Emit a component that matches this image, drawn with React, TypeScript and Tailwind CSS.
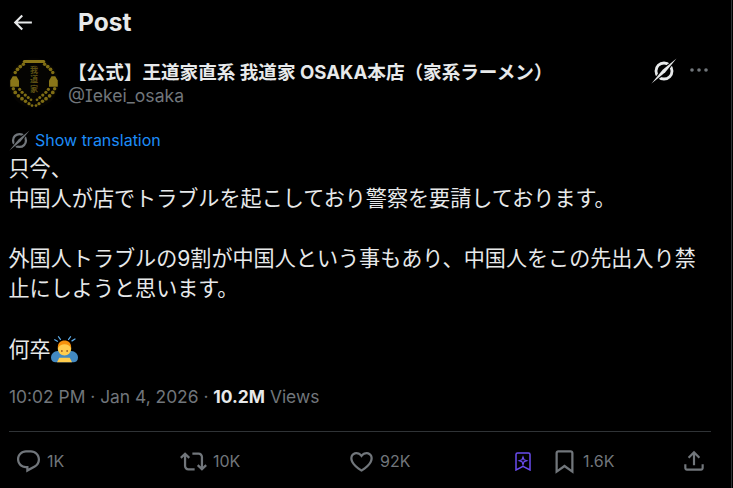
const sans = "font-['Inter','Noto_Sans_CJK_JP',sans-serif]";

const P = {
  arrow: "M7.414 13l5.043 5.04-1.414 1.42L3.586 12l7.457-7.46 1.414 1.42L7.414 11H21v2H7.414z",
  reply: "M1.751 10c0-4.42 3.584-8 8.005-8h4.366c4.49 0 8.129 3.64 8.129 8.13 0 2.96-1.607 5.68-4.196 7.11l-8.054 4.46v-3.69h-.067c-4.49.1-8.183-3.51-8.183-8.01zm8.005-6c-3.317 0-6.005 2.69-6.005 6 0 3.37 2.77 6.08 6.138 6.01l.351-.01h1.761v2.3l5.087-2.81c1.951-1.08 3.163-3.13 3.163-5.36 0-3.39-2.744-6.13-6.129-6.13H9.756z",
  retweet: "M4.5 3.88l4.432 4.14-1.364 1.46L5.5 7.55V16c0 1.1.896 2 2 2H13v2H7.5c-2.209 0-4-1.79-4-4V7.55L1.432 9.48.068 8.02 4.5 3.88zM16.5 6H11V4h5.5c2.209 0 4 1.79 4 4v8.45l2.068-1.93 1.364 1.46-4.432 4.14-4.432-4.14 1.364-1.46 2.068 1.93V8c0-1.1-.896-2-2-2z",
  heart: "M16.697 5.5c-1.222-.06-2.679.51-3.89 2.16l-.805 1.09-.806-1.09C9.984 6.01 8.526 5.44 7.304 5.5c-1.243.07-2.349.78-2.91 1.91-.552 1.12-.633 2.78.479 4.82 1.074 1.97 3.257 4.27 7.129 6.61 3.87-2.34 6.052-4.64 7.126-6.61 1.111-2.04 1.03-3.7.477-4.82-.561-1.13-1.666-1.84-2.908-1.91zm4.187 7.69c-1.351 2.48-4.001 5.12-8.379 7.67l-.503.3-.504-.3c-4.379-2.55-7.029-5.19-8.382-7.67-1.36-2.5-1.41-4.86-.514-6.67.887-1.79 2.647-2.91 4.601-3.01 1.651-.09 3.368.56 4.798 2.01 1.429-1.45 3.146-2.1 4.796-2.01 1.954.1 3.714 1.22 4.601 3.01.896 1.81.846 4.17-.514 6.67z",
  bookmark: "M4 4.5C4 3.12 5.119 2 6.5 2h11C18.881 2 20 3.12 20 4.5v18.44l-8-5.71-8 5.71V4.5zM6.5 4c-.276 0-.5.22-.5.5v14.56l6-4.29 6 4.29V4.5c0-.28-.224-.5-.5-.5h-11z",
  share: "M12 2.59l5.7 5.7-1.41 1.42L13 6.41V16h-2V6.41l-3.3 3.3-1.41-1.42L12 2.59zM21 15l-.02 3.51c0 1.38-1.12 2.49-2.5 2.49H5.5C4.11 21 3 19.88 3 18.5V15h2v3.5c0 .28.22.5.5.5h12.98c.28 0 .5-.22.5-.5L19 15h2z",
};

function Icon({ d, className }: { d: string; className: string }) {
  return (
    <svg viewBox="0 0 24 24" className={`fill-current shrink-0 ${className}`}>
      <path d={d} />
    </svg>
  );
}

function NoTranslate({ className }: { className: string }) {
  return (
    <svg viewBox="0 0 24 24" fill="none" className={`shrink-0 ${className}`}>
      <circle cx="12" cy="12" r="7.4" stroke="currentColor" strokeWidth="2.6" />
      <path d="M0.5 23.5 L10 10 L23.5 0.500 L14 14 Z" fill="#000" stroke="#000" strokeWidth="0.8" />
      <path d="M0.5 23.5 L10.800 10.800 L23.5 0.500 L13.200 13.200 Z" fill="currentColor" />
    </svg>
  );
}

function Avatar() {
  const ring: [number, number, number][] = [
    [11.5, 5, 1.4], [9, 6.8, 1.5], [6.8, 9, 1.5], [5, 11.5, 1.4],
    [28.5, 5, 1.4], [31, 6.8, 1.5], [33.2, 9, 1.5], [35, 11.5, 1.4],
    [3.5, 24.5, 1.4], [5, 27.5, 1.5], [7.5, 30.2, 1.5], [10.4, 32.5, 1.5], [13.2, 34.6, 1.4], [16, 36.5, 1.3], [18.4, 38, 1.1],
    [36.5, 24.500, 1.4], [35, 27.5, 1.5], [32.5, 30.2, 1.5], [29.6, 32.5, 1.5], [26.8, 34.6, 1.4], [24, 36.5, 1.3], [21.6, 38, 1.1],
    [8.5, 25, 1.3], [10.5, 27.4, 1.3], [13, 29.6, 1.3], [15.4, 31.6, 1.2], [17.6, 33.4, 1.1],
    [31.5, 25, 1.3], [29.5, 27.4, 1.3], [27, 29.6, 1.3], [24.6, 31.6, 1.2], [22.4, 33.4, 1.1],
  ];
  return (
    <svg viewBox="0 0 40 40" className="w-[50px] h-[50px] shrink-0">
      <circle cx="20" cy="20" r="20" fill="#050402" />
      <rect x="11" y="1.600" width="18" height="2.400" rx="1.200" fill="#8a7618" />
      {ring.map(([x, y, r], i) => (
        <circle key={i} cx={x} cy={y} r={r} fill="#7f6d14" />
      ))}
      <path d="M1 18 L3 14.500 L6 14.500 L8 18 L8 23 L1 23 Z" fill="#8a7618" />
      <path d="M32 18 L34 14.500 L37 14.500 L39 18 L39 23 L32 23 Z" fill="#8a7618" />
      <text x="20" y="12" textAnchor="middle" fontSize="6.500" fontWeight="700" fill="#5c4f12">我</text>
      <text x="20" y="19.500" textAnchor="middle" fontSize="6.500" fontWeight="700" fill="#5c4f12">道</text>
      <text x="20" y="27" textAnchor="middle" fontSize="6.500" fontWeight="700" fill="#5c4f12">家</text>
    </svg>
  );
}

function BowEmoji() {
  return (
    <svg viewBox="0 0 36 36" className="w-[27px] h-[27px] shrink-0">
      <path d="M0 29c0-5 4-9 9-9h18c5 0 9 4 9 9 0 4-3 6-6 6H6c-3 0-6-2-6-6z" fill="#4289c1" />
      <path d="M11 29h14l3 6H8z" fill="#ffcc4d" />
      <circle cx="18" cy="17" r="9" fill="#ffcc4d" />
      <path d="M9 16c0-7 4-10 9-10s9 3 9 10c-2-3-5-5-9-5s-7 2-9 5z" fill="#f4900c" />
      <circle cx="14.500" cy="20" r="1.100" fill="#662113" />
      <circle cx="21.500" cy="20" r="1.100" fill="#662113" />
      <path d="M10 1l2.500 3.500M5 5l3.500 2M26 1l-2.500 3.500M32 4l-4 2.500" stroke="#5dadec" strokeWidth="1.700" strokeLinecap="round" />
    </svg>
  );
}

function Stat({ d, label, width, iconClass, gap }: { d: string; label: string; width: string; iconClass: string; gap: string }) {
  return (
    <div className={`flex items-center ${width} ${gap}`}>
      <Icon d={d} className={iconClass} />
      <span className="text-[16px] leading-5 text-[#71767b]">{label}</span>
    </div>
  );
}

export default function App() {
  return (
    <div className={`h-[488px] w-[733px] bg-black overflow-hidden text-[#e7e9ea] ${sans}`}>
      <div className="h-[488px] w-[732px] border-r border-[#2f3336] flex flex-col">
        <header className="h-[44px] flex items-center pl-[10px] shrink-0">
          <Icon d={P.arrow} className="w-[25px] h-[25px] text-[#e7e9ea]" />
          <h1 className="ml-[43px] text-[24.5px] leading-[28px] font-bold">Post</h1>
        </header>

        <section className="mt-[14px] pl-[9px] pr-[22px] flex h-[50px] shrink-0">
          <Avatar />
          <div className="ml-[9px] w-[520px] flex flex-col pt-[2px]">
            <div className="text-[18.6px] leading-[24px] font-bold whitespace-nowrap">【公式】王道家直系 我道家 OSAKA本店（家系ラーメン）</div>
            <div className="mt-[1px] text-[17.6px] leading-[22px] text-[#71767b] [font-feature-settings:'cv08']">@Iekei_osaka</div>
          </div>
          <div className="ml-[67px] h-[26px] flex items-center gap-[12px]">
            <NoTranslate className="w-[26px] h-[26px] text-[#e7e9ea]" />
            <svg viewBox="0 0 20 6" className="w-[20px] h-[6px] fill-[#71767b] -mt-[2px]">
              <circle cx="3" cy="3" r="1.800" />
              <circle cx="10" cy="3" r="1.800" />
              <circle cx="17" cy="3" r="1.800" />
            </svg>
          </div>
        </section>

        <div className="mt-[22px] ml-[9px] h-[20px] flex items-center gap-[5px] shrink-0">
          <NoTranslate className="w-[21px] h-[21px] text-[#71767b]" />
          <span className="text-[16px] leading-5 text-[#1d8cf8]">Show translation</span>
        </div>

        <main className="mt-[3.5px] ml-[8.5px] text-[21.1px] leading-[30.2px] text-[#e7e9ea] w-[700px] shrink-0">
          <p>只今、</p>
          <p>中国人が店でトラブルを起こしており警察を要請しております。</p>
          <p className="mt-[30.2px]">外国人トラブルの9割が中国人という事もあり、中国人をこの先出入り禁<br />止にしようと思います。</p>
          <p className="mt-[30.2px] flex items-center h-[30.2px]">何卒<BowEmoji /></p>
        </main>

        <div className="mt-[20.5px] ml-[9px] text-[17.4px] leading-[24px] text-[#71767b] whitespace-nowrap shrink-0">
          10:02 PM · Jan 4, 2026 · <b className="font-bold text-[#e7e9ea]">10.2M</b> Views
        </div>

        <hr className="mt-[22px] ml-[9px] w-[702px] border-t border-[#2f3336] shrink-0" />

        <footer className="mt-[15px] pl-[15px] flex items-center h-[28px] shrink-0">
          <Stat d={P.reply} label="1K" width="w-[165px]" gap="gap-[5px]" iconClass="w-[27px] h-[27px] text-[#71767b]" />
          <Stat d={P.retweet} label="10K" width="w-[168px]" gap="gap-[6px]" iconClass="w-[27px] h-[27px] text-[#71767b]" />
          <Stat d={P.heart} label="92K" width="w-[167px]" gap="gap-[5px]" iconClass="w-[27px] h-[27px] text-[#71767b]" />
          <div className="w-[36px] flex items-center">
            <svg viewBox="0 0 16 19" fill="none" className="w-[16px] h-[19px]">
              <path d="M2.500 1h11a1.500 1.500 0 0 1 1.500 1.500V18l-7-3.600L1 18V2.500A1.500 1.500 0 0 1 2.500 1z" stroke="#6a4cf0" strokeWidth="1.500" />
              <path d="M8 5l1 2.800 2.800 1-2.800 1L8 12.600l-1-2.800-2.800-1 2.800-1z" stroke="#6a4cf0" strokeWidth="1.200" />
            </svg>
          </div>
          <Stat d={P.bookmark} label="1.6K" width="w-[130px]" gap="gap-[5px]" iconClass="w-[27px] h-[27px] text-[#71767b]" />
          <Icon d={P.share} className="w-[26px] h-[26px] text-[#71767b]" />
        </footer>
      </div>
    </div>
  );
}
